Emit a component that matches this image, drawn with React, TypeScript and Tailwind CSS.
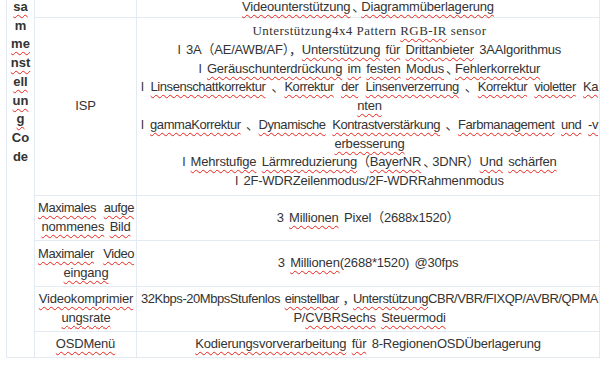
import type { ReactNode } from "react";

function U({ children }: { children: ReactNode }) {
  return (
    <span className="underline decoration-wavy decoration-[#e8231a] decoration-1 underline-offset-[3px]">
      {children}
    </span>
  );
}

// the 、 and ， marks sit narrow in the original font
function Mark({ c = "、" }: { c?: string }) {
  return <span className="ml-[2px] tracking-[-4px]">{c}</span>;
}

function Line({ children, full = false }: { children: ReactNode; full?: boolean }) {
  return (
    <p
      className={
        full
          ? "whitespace-nowrap text-justify tracking-[-0.45px] [text-align-last:justify]"
          : "whitespace-nowrap text-center [word-spacing:2px]"
      }
    >
      {children}
    </p>
  );
}

const codeLines: [string, boolean][] = [
  ["sa", true],
  ["m", false],
  ["me", true],
  ["nst", true],
  ["ell", true],
  ["un", true],
  ["g", true],
  ["Co", false],
  ["de", false],
];

export default function App() {
  return (
    <div className="min-h-[367px] bg-white">
      <div className="ml-[6px] flex w-[594px] border-x border-b border-[#e3eaf1] font-['Liberation_Sans','Noto_Sans_CJK_SC',sans-serif] text-[13px] leading-[18.7px] tracking-[-0.2px] text-[#333]">
        <div className="w-[28px] shrink-0 border-r border-[#e3eaf1] font-bold tracking-normal">
          <div className="-mt-[2px] flex flex-col items-center">
            {codeLines.map(([t, u]) => (
              <span key={t}>{u ? <U>{t}</U> : t}</span>
            ))}
          </div>
        </div>

        <div className="flex min-w-0 flex-1 flex-col">
          <div className="flex h-[18px] border-b border-[#e3eaf1]">
            <div className="w-[102px] shrink-0 border-r border-[#e3eaf1]" />
            <div className="min-w-0 flex-1 px-[3px]">
              <div className="-mt-[2px]">
                <Line>
                  <U>Videounterstützung</U>
                  <Mark />
                  <U>Diagrammüberlagerung</U>
                </Line>
              </div>
            </div>
          </div>

          <div className="flex h-[178px] border-b border-[#e3eaf1]">
            <div className="flex w-[102px] shrink-0 items-center justify-center border-r border-[#e3eaf1]">ISP</div>
            <div className="flex min-w-0 flex-1 flex-col justify-center pl-[4px] pr-[1px]">
              <p className="whitespace-nowrap text-center font-['Liberation_Serif',serif] tracking-[0.45px]">
                Unterstützung4x4 Pattern <U>RGB-IR</U> sensor
              </p>
              <Line>
                l 3A（AE/AWB/AF），<U>Unterstützung</U> <U>für</U> <U>Drittanbieter</U> 3AAlgorithmus
              </Line>
              <Line>
                l <U>Geräuschunterdrückung</U> <U>im</U> <U>festen</U> <U>Modus</U>
                <Mark />
                <U>Fehlerkorrektur</U>
              </Line>
              <Line full>
                l <U>Linsenschattkorrektur</U>
                <Mark />
                <U>Korrektur</U> <U>der</U> <U>Linsenverzerrung</U>
                <Mark />
                <U>Korrektur</U> <U>violetter</U> <U>Ka</U>
              </Line>
              <Line>
                <U>nten</U>
              </Line>
              <Line full>
                l <U>gammaKorrektur</U>
                <Mark />
                <U>Dynamische</U> <U>Kontrastverstärkung</U>
                <Mark />
                <U>Farbmanagement</U> <U>und</U> <U>-v</U>
              </Line>
              <Line>
                <U>erbesserung</U>
              </Line>
              <Line>
                l <U>Mehrstufige</U> <U>Lärmreduzierung</U>（<U>BayerNR</U>
                <Mark />
                3DNR）<U>Und</U> <U>schärfen</U>
              </Line>
              <Line>l 2F-WDRZeilenmodus/2F-WDRRahmenmodus</Line>
            </div>
          </div>

          <div className="flex h-[45px] border-b border-[#e3eaf1]">
            <div className="flex w-[102px] shrink-0 flex-col justify-center border-r border-[#e3eaf1] pl-[3px] pr-[2px]">
              <Line full>
                <U>Maximales</U> <U>aufge</U>
              </Line>
              <Line>
                <U>nommenes</U> <U>Bild</U>
              </Line>
            </div>
            <div className="flex min-w-0 flex-1 items-center justify-center">
              <Line>
                3 <U>Millionen</U> Pixel（2688x1520）
              </Line>
            </div>
          </div>

          <div className="flex h-[46px] border-b border-[#e3eaf1]">
            <div className="flex w-[102px] shrink-0 flex-col justify-center border-r border-[#e3eaf1] pl-[3px] pr-[2px]">
              <Line full>
                <U>Maximaler</U> <U>Video</U>
              </Line>
              <Line>
                <U>eingang</U>
              </Line>
            </div>
            <div className="flex min-w-0 flex-1 items-center justify-center">
              <Line>
                3 <U>Millionen</U>(2688*1520) @30fps
              </Line>
            </div>
          </div>

          <div className="flex h-[45px] border-b border-[#e3eaf1]">
            <div className="flex w-[102px] shrink-0 flex-col justify-center border-r border-[#e3eaf1] pl-[3px] pr-[2px]">
              <Line>
                <U>Videokomprimier</U>
              </Line>
              <Line>
                <U>ungsrate</U>
              </Line>
            </div>
            <div className="flex min-w-0 flex-1 flex-col justify-center pl-[4px] pr-[1px]">
              <Line full>
                32Kbps-20MbpsStufenlos <U>einstellbar</U>
                <Mark c="，" />
                <U>Unterstützung</U>CBR/VBR/FIXQP/AVBR/QPMA
              </Line>
              <Line>
                P/<U>CVBRSechs</U> <U>Steuermodi</U>
              </Line>
            </div>
          </div>

          <div className="flex h-[25px]">
            <div className="flex w-[102px] shrink-0 items-center justify-center border-r border-[#e3eaf1]">
              <U>OSDMenü</U>
            </div>
            <div className="flex min-w-0 flex-1 items-center justify-center">
              <Line>
                <U>Kodierungsvorverarbeitung</U> <U>für</U> 8-RegionenOSDÜberlagerung
              </Line>
            </div>
          </div>
        </div>
      </div>
    </div>
  );
}
